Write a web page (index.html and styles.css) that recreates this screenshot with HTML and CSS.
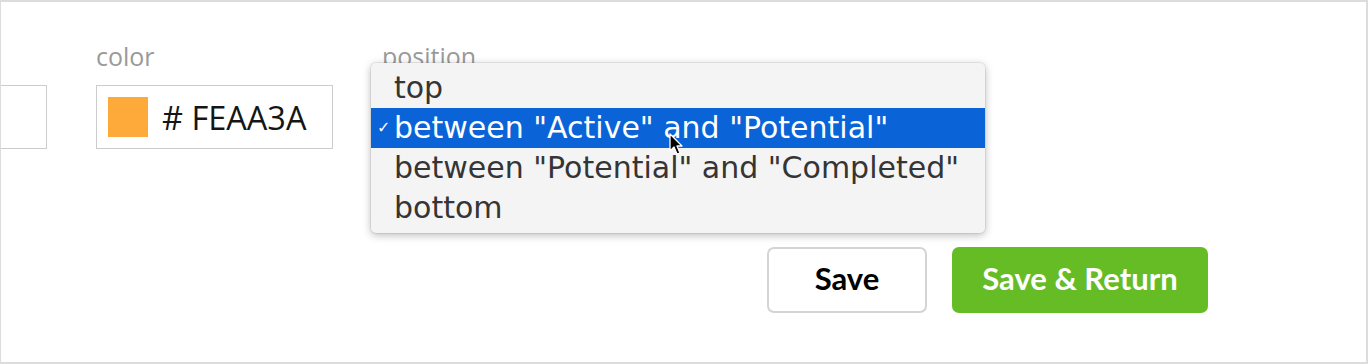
FILE: index.html
```html
<!DOCTYPE html>
<html>
<head>
<meta charset="utf-8">
<link rel="stylesheet" href="styles.css">
</head>
<body>
<div class="frame">
  <div class="fields">
    <div class="field field-stub">
      <div class="label">&nbsp;</div>
      <div class="input stub"></div>
    </div>
    <div class="field field-color">
      <div class="label">color</div>
      <div class="input color-input">
        <span class="swatch"></span>
        <span class="hex"># FEAA3A</span>
      </div>
    </div>
    <div class="field field-position">
      <div class="label">position</div>
      <div class="input pos-input"></div>
    </div>
  </div>
  <div class="actions">
    <button class="btn btn-save">Save</button>
    <button class="btn btn-return">Save &amp; Return</button>
  </div>
  <ul class="menu">
    <li class="item">top</li>
    <li class="item selected"><span class="check">✓</span>between "Active" and "Potential"</li>
    <li class="item">between "Potential" and "Completed"</li>
    <li class="item">bottom</li>
  </ul>
  <svg class="cursor" width="16" height="24" viewBox="0 0 16 24">
    <path d="M1 1 L1 18 L5 14 L8 21 L11 20 L8 13 L13 13 Z" fill="#000" stroke="#fff" stroke-width="1.3" stroke-linejoin="round"/>
  </svg>
</div>
</body>
</html>
```
FILE: styles.css
```css
html, body {
  margin: 0;
  padding: 0;
  background: #fff;
}
.frame {
  position: relative;
  width: 1368px;
  height: 364px;
  box-sizing: border-box;
  border: 1px solid #dcdcdc;
  border-top-width: 2px;
  border-right-width: 2px;
  border-bottom-width: 2px;
  background: #fff;
  overflow: hidden;
  font-family: "Open Sans", "Liberation Sans", sans-serif;
}
.fields {
  display: flex;
  align-items: flex-start;
  padding-top: 39px;
}
.field {
  display: flex;
  flex-direction: column;
}
.field-color { margin-left: 49px; }
.field-position { margin-left: 49px; }
.label {
  font-size: 25px;
  line-height: 30px;
  height: 30px;
  color: #9a9a9a;
  margin-bottom: 14px;
}
.input {
  box-sizing: border-box;
  height: 64px;
  border: 1px solid #cccccc;
  background: #fff;
}
.stub {
  width: 46px;
  border-left: none;
}
.color-input {
  width: 237px;
  display: flex;
  align-items: center;
  padding-left: 11px;
}
.swatch {
  width: 40px;
  height: 40px;
  background: #feaa3a;
}
.hex {
  margin-left: 14px;
  font-size: 32.5px;
  color: #151515;
}
.pos-input {
  width: 600px;
}
.actions {
  display: flex;
  justify-content: flex-end;
  gap: 25px;
  padding-right: 158px;
  margin-top: 98px;
}
.btn {
  height: 66px;
  border-radius: 7px;
  font-family: "Lato", "Liberation Sans", sans-serif;
  font-weight: 700;
  font-size: 31px;
  line-height: 1;
  cursor: pointer;
  padding: 0 0 3px;
}
.btn-save {
  width: 160px;
  background: #fff;
  color: #000;
  border: 2px solid #d4d4d4;
}
.btn-return {
  width: 256px;
  background: #66bc24;
  color: #fff;
  border: none;
}
.menu {
  position: absolute;
  left: 370px;
  top: 61px;
  width: 614px;
  margin: 0;
  padding: 5px 0;
  list-style: none;
  background: #f4f4f4;
  border-radius: 5px;
  box-shadow: 0 2px 8px rgba(0,0,0,0.28), 0 0 0 1px rgba(0,0,0,0.06);
  font-family: "DejaVu Sans", sans-serif;
  font-size: 30px;
  color: #353535;
}
.item {
  height: 40px;
  line-height: 40px;
  padding-left: 23px;
  position: relative;
  white-space: nowrap;
}
.item.selected {
  background: #0b63d8;
  color: #fff;
}
.check {
  position: absolute;
  left: 6px;
  top: 0;
  font-size: 16px;
}
.cursor {
  position: absolute;
  left: 668px;
  top: 131px;
}
```
